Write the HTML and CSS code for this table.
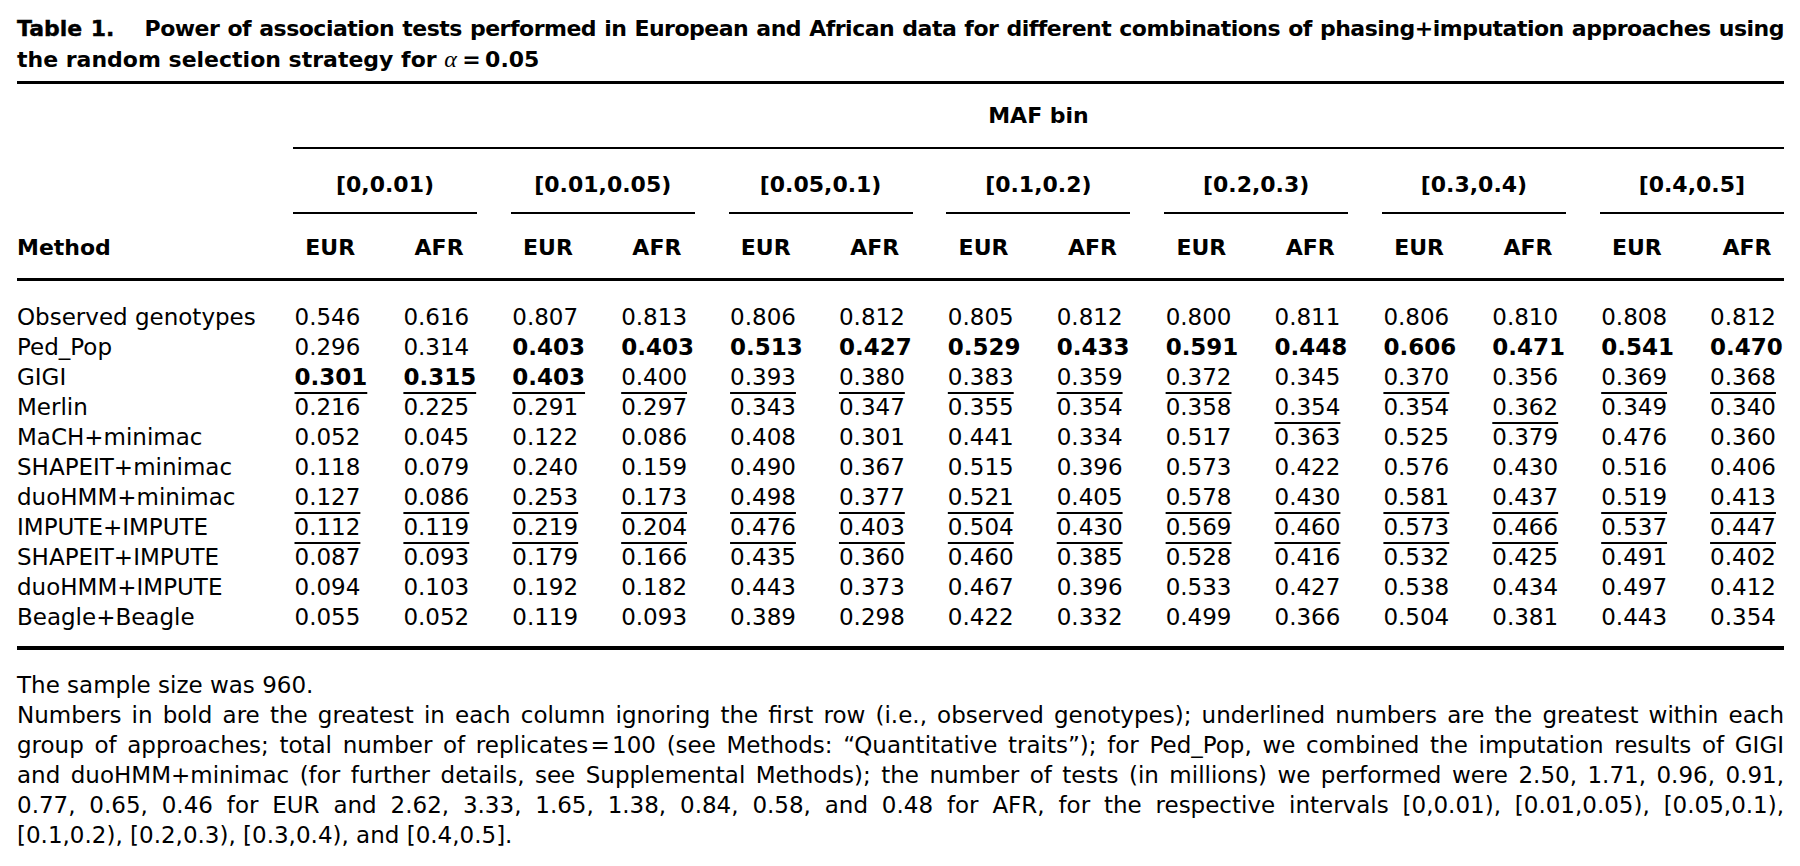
FILE: index.html
```html
<!DOCTYPE html>
<html lang="en">
<head>
  <meta charset="UTF-8">
  <title>Table 1 - Power of association tests</title>
  <link rel="stylesheet" href="styles.css">
</head>
<body>
  <div class="page">
    <p class="title">
      <span class="line first"><span class="label">Table 1.</span> Power of association tests performed in European and African data for different combinations of phasing+imputation approaches using</span>
      <span class="line">the random selection strategy for <i class="greek">α</i>&#8201;=&#8201;0.05</span>
    </p>

    <table class="results">
      <colgroup>
        <col class="c-method">
        <col class="c-num"><col class="c-num"><col class="c-num"><col class="c-num">
        <col class="c-num"><col class="c-num"><col class="c-num"><col class="c-num">
        <col class="c-num"><col class="c-num"><col class="c-num"><col class="c-num">
        <col class="c-num"><col class="c-last">
      </colgroup>
      <thead>
        <tr class="maf">
          <th></th>
          <th colspan="14"><div class="maf-label">MAF bin</div></th>
        </tr>
        <tr class="bins">
          <th></th>
          <th colspan="2"><div class="bin">[0,0.01)</div></th>
          <th colspan="2"><div class="bin">[0.01,0.05)</div></th>
          <th colspan="2"><div class="bin">[0.05,0.1)</div></th>
          <th colspan="2"><div class="bin">[0.1,0.2)</div></th>
          <th colspan="2"><div class="bin">[0.2,0.3)</div></th>
          <th colspan="2"><div class="bin">[0.3,0.4)</div></th>
          <th colspan="2"><div class="bin">[0.4,0.5]</div></th>
        </tr>
        <tr class="pops">
          <th class="method">Method</th>
          <th>EUR</th><th>AFR</th><th>EUR</th><th>AFR</th><th>EUR</th><th>AFR</th><th>EUR</th>
          <th>AFR</th><th>EUR</th><th>AFR</th><th>EUR</th><th>AFR</th><th>EUR</th><th>AFR</th>
        </tr>
      </thead>
      <tbody>
        <tr>
          <td class="method">Observed genotypes</td>
          <td>0.546</td><td>0.616</td><td>0.807</td><td>0.813</td><td>0.806</td><td>0.812</td><td>0.805</td>
          <td>0.812</td><td>0.800</td><td>0.811</td><td>0.806</td><td>0.810</td><td>0.808</td><td>0.812</td>
        </tr>
        <tr>
          <td class="method">Ped_Pop</td>
          <td>0.296</td><td>0.314</td><td><b>0.403</b></td><td><b>0.403</b></td><td><b>0.513</b></td><td><b>0.427</b></td><td><b>0.529</b></td>
          <td><b>0.433</b></td><td><b>0.591</b></td><td><b>0.448</b></td><td><b>0.606</b></td><td><b>0.471</b></td><td><b>0.541</b></td><td><b>0.470</b></td>
        </tr>
        <tr>
          <td class="method">GIGI</td>
          <td><b><u>0.301</u></b></td><td><b><u>0.315</u></b></td><td><b><u>0.403</u></b></td><td><u>0.400</u></td><td><u>0.393</u></td><td><u>0.380</u></td><td><u>0.383</u></td>
          <td><u>0.359</u></td><td><u>0.372</u></td><td>0.345</td><td><u>0.370</u></td><td>0.356</td><td><u>0.369</u></td><td><u>0.368</u></td>
        </tr>
        <tr>
          <td class="method">Merlin</td>
          <td>0.216</td><td>0.225</td><td>0.291</td><td>0.297</td><td>0.343</td><td>0.347</td><td>0.355</td>
          <td>0.354</td><td>0.358</td><td><u>0.354</u></td><td>0.354</td><td><u>0.362</u></td><td>0.349</td><td>0.340</td>
        </tr>
        <tr>
          <td class="method">MaCH+minimac</td>
          <td>0.052</td><td>0.045</td><td>0.122</td><td>0.086</td><td>0.408</td><td>0.301</td><td>0.441</td>
          <td>0.334</td><td>0.517</td><td>0.363</td><td>0.525</td><td>0.379</td><td>0.476</td><td>0.360</td>
        </tr>
        <tr>
          <td class="method">SHAPEIT+minimac</td>
          <td>0.118</td><td>0.079</td><td>0.240</td><td>0.159</td><td>0.490</td><td>0.367</td><td>0.515</td>
          <td>0.396</td><td>0.573</td><td>0.422</td><td>0.576</td><td>0.430</td><td>0.516</td><td>0.406</td>
        </tr>
        <tr>
          <td class="method">duoHMM+minimac</td>
          <td><u>0.127</u></td><td><u>0.086</u></td><td><u>0.253</u></td><td><u>0.173</u></td><td><u>0.498</u></td><td><u>0.377</u></td><td><u>0.521</u></td>
          <td><u>0.405</u></td><td><u>0.578</u></td><td><u>0.430</u></td><td><u>0.581</u></td><td><u>0.437</u></td><td><u>0.519</u></td><td><u>0.413</u></td>
        </tr>
        <tr>
          <td class="method">IMPUTE+IMPUTE</td>
          <td><u>0.112</u></td><td><u>0.119</u></td><td><u>0.219</u></td><td><u>0.204</u></td><td><u>0.476</u></td><td><u>0.403</u></td><td><u>0.504</u></td>
          <td><u>0.430</u></td><td><u>0.569</u></td><td><u>0.460</u></td><td><u>0.573</u></td><td><u>0.466</u></td><td><u>0.537</u></td><td><u>0.447</u></td>
        </tr>
        <tr>
          <td class="method">SHAPEIT+IMPUTE</td>
          <td>0.087</td><td>0.093</td><td>0.179</td><td>0.166</td><td>0.435</td><td>0.360</td><td>0.460</td>
          <td>0.385</td><td>0.528</td><td>0.416</td><td>0.532</td><td>0.425</td><td>0.491</td><td>0.402</td>
        </tr>
        <tr>
          <td class="method">duoHMM+IMPUTE</td>
          <td>0.094</td><td>0.103</td><td>0.192</td><td>0.182</td><td>0.443</td><td>0.373</td><td>0.467</td>
          <td>0.396</td><td>0.533</td><td>0.427</td><td>0.538</td><td>0.434</td><td>0.497</td><td>0.412</td>
        </tr>
        <tr>
          <td class="method">Beagle+Beagle</td>
          <td>0.055</td><td>0.052</td><td>0.119</td><td>0.093</td><td>0.389</td><td>0.298</td><td>0.422</td>
          <td>0.332</td><td>0.499</td><td>0.366</td><td>0.504</td><td>0.381</td><td>0.443</td><td>0.354</td>
        </tr>
      </tbody>
    </table>

    <div class="notes">
      <p>The sample size was 960.</p>
      <p>
        <span class="line">Numbers in bold are the greatest in each column ignoring the first row (i.e., observed genotypes); underlined numbers are the greatest within each</span>
        <span class="line">group of approaches; total number of replicates&#8202;=&#8202;100 (see Methods: “Quantitative traits”); for Ped_Pop, we combined the imputation results of GIGI</span>
        <span class="line">and duoHMM+minimac (for further details, see Supplemental Methods); the number of tests (in millions) we performed were 2.50, 1.71, 0.96, 0.91,</span>
        <span class="line">0.77, 0.65, 0.46 for EUR and 2.62, 3.33, 1.65, 1.38, 0.84, 0.58, and 0.48 for AFR, for the respective intervals [0,0.01), [0.01,0.05), [0.05,0.1),</span>
        <span class="line last">[0.1,0.2), [0.2,0.3), [0.3,0.4), and [0.4,0.5].</span>
      </p>
    </div>
  </div>
</body>
</html>
```

FILE: styles.css
```css
body {
  margin: 0;
  background: #fff;
  color: #000;
  font-family: "DejaVu Sans", "Noto Sans", sans-serif;
}

.page {
  width: 1767px;
  padding: 13px 0 0 17px;
}

/* caption */
.title {
  margin: 0 0 6px;
  font-size: 22px;
  font-weight: bold;
  line-height: 31px;
}
.title .line {
  display: block;
  white-space: nowrap;
}
.title .line.first {
  letter-spacing: -0.5px;
  text-align: justify;
  text-align-last: justify;
}
.title .label {
  margin-right: 22px;
  letter-spacing: 0;
  -webkit-text-stroke: 0.4px #000;
}
.greek {
  font-family: "Liberation Serif", serif;
  font-weight: normal;
  font-size: 24px;
  padding-right: 1px;
}

/* table */
.results {
  width: 1767px;
  table-layout: fixed;
  border-collapse: separate;
  border-spacing: 0;
  border-top: 3px solid #000;
  border-bottom: 4px solid #000;
  font-size: 23px;
  line-height: 30px;
}
.c-method { width: 256px; }
.c-num { width: 108.9px; }
.c-last { width: 95.3px; }

.results th,
.results td {
  padding: 0 16px 0 21.5px;
  white-space: nowrap;
}
.results th:last-child,
.results td:last-child {
  padding-right: 0;
}
.results td {
  text-align: left;
}
.results th {
  font-size: 22px;
  text-align: center;
}
.results .method {
  padding-left: 0;
  padding-right: 0;
  text-align: left;
}

.maf th,
.bins th {
  padding: 0;
}
.maf-label {
  margin-left: 20px;
  padding: 17px 0 16px;
  border-bottom: 2px solid #000;
}
.bin {
  margin: 0 13.8px 0 20px;
  padding: 21px 0 12px;
  border-bottom: 2px solid #000;
}
.bins th:last-child .bin {
  margin-right: 0;
}

.pops th {
  padding-top: 19px;
  padding-bottom: 15px;
  border-bottom: 3px solid #000;
}

tbody tr:first-child td {
  padding-top: 21px;
}
tbody tr:last-child td {
  padding-bottom: 14px;
}

.results u {
  text-decoration: underline;
  text-decoration-thickness: 2px;
  text-underline-offset: 7px;
  text-decoration-skip-ink: none;
}

/* footnotes */
.notes {
  margin-top: 20px;
  font-size: 23px;
  line-height: 30px;
}
.notes p {
  margin: 0;
}
.notes .line {
  display: block;
  white-space: nowrap;
  text-align: justify;
  text-align-last: justify;
}
.notes .line.last {
  text-align-last: left;
}
```
